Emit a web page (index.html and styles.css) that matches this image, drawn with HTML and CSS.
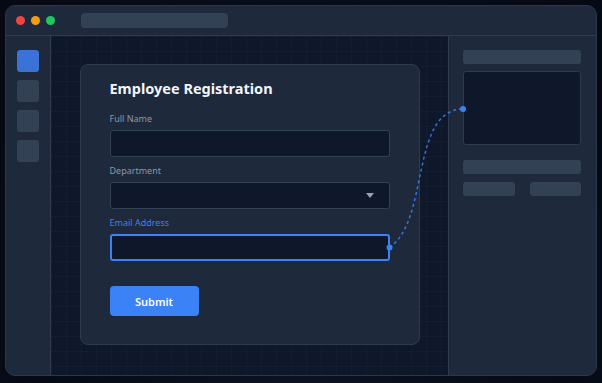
FILE: index.html
```html
<!DOCTYPE html>
<html lang="en">
  <head>
    <meta charset="UTF-8" />
    <meta name="viewport" content="width=device-width, initial-scale=1.0" />
    <title>Employee Registration</title>
    <link rel="stylesheet" href="styles.css">
  </head>
  <body>
    <div class="window">
      <!-- Title bar -->
      <div class="titlebar">
        <div class="dots">
          <span class="dot red"></span>
          <span class="dot amber"></span>
          <span class="dot green"></span>
        </div>
        <div class="address"></div>
      </div>
      <div class="workspace">
        <!-- Tool sidebar -->
        <div class="sidebar">
          <span class="tool active"></span>
          <span class="tool"></span>
          <span class="tool"></span>
          <span class="tool"></span>
        </div>
        <!-- Canvas with the form -->
        <div class="canvas">
          <form class="card" onsubmit="return false">
            <h1>Employee Registration</h1>
            <div class="field">
              <label>Full Name</label>
              <div class="input"></div>
            </div>
            <div class="field">
              <label>Department</label>
              <div class="input select"><span class="caret"></span></div>
            </div>
            <div class="field focused">
              <label>Email Address</label>
              <div class="input"></div>
            </div>
            <button class="submit">Submit</button>
          </form>
        </div>
        <!-- Properties panel -->
        <div class="panel">
          <div class="bar"></div>
          <div class="preview"></div>
          <div class="bar wide"></div>
          <div class="pair">
            <div class="bar"></div>
            <div class="bar"></div>
          </div>
        </div>
      </div>
    </div>
    <!-- Binding line from the email field to the preview box -->
    <svg class="link" width="602" height="383" viewBox="0 0 602 383">
      <path d="M389.5 247.5 C430 220, 410 110, 463 109" fill="none" stroke="#3b82f6" stroke-opacity="0.85" stroke-width="1.5" stroke-dasharray="3 3" />
      <circle cx="389.5" cy="247.5" r="3" fill="#3b82f6" />
      <circle cx="463" cy="109" r="3" fill="#3b82f6" />
    </svg>
  </body>
</html>
```

FILE: styles.css
```css
/* Reset */
* {
  box-sizing: border-box;
  margin: 0;
  padding: 0;
}
html,
body {
  height: 100%;
}
body {
  position: relative;
  padding: 5px;
  font-family: "Noto Sans", "DejaVu Sans", sans-serif;
  background: radial-gradient(ellipse at 50% 100%, #121b30 0%, #0a1020 55%, #060a16 100%);
  overflow: hidden;
}
/* App window */
.window {
  display: flex;
  flex-direction: column;
  width: 592px;
  height: 371px;
  background: #1e293b;
  border: 1px solid #2b374a;
  border-radius: 10px;
  overflow: hidden;
  box-shadow: 0 10px 30px rgba(0, 0, 0, 0.45);
}
.titlebar {
  display: flex;
  align-items: center;
  gap: 26px;
  height: 30px;
  padding-left: 10px;
  border-bottom: 1px solid #2e3b50;
  flex-shrink: 0;
}
.dots {
  display: flex;
  gap: 6px;
}
.dot {
  width: 9px;
  height: 9px;
  border-radius: 50%;
}
.red {
  background: #ef4444;
}
.amber {
  background: #f59e0b;
}
.green {
  background: #22c55e;
}
.address {
  width: 147px;
  height: 15px;
  background: #334155;
  border-radius: 4px;
}
.workspace {
  display: flex;
  flex: 1;
  min-height: 0;
}
/* Sidebar */
.sidebar {
  display: flex;
  flex-direction: column;
  gap: 8px;
  width: 45px;
  padding: 14px 0 0 11px;
  border-right: 1px solid #2e3b50;
  flex-shrink: 0;
}
.tool {
  width: 22px;
  height: 22px;
  background: #334155;
  border-radius: 3px;
}
.tool.active {
  background: #3a72d8;
}
/* Canvas */
.canvas {
  display: flex;
  align-items: center;
  justify-content: center;
  flex: 1;
  padding-bottom: 2px;
  background-color: #0f172a;
  background-image:
    linear-gradient(rgba(51, 65, 85, 0.13) 1px, transparent 1px),
    linear-gradient(90deg, rgba(51, 65, 85, 0.13) 1px, transparent 1px);
  background-size: 15px 15px;
  background-position: 0 0;
}
.card {
  display: flex;
  flex-direction: column;
  width: 340px;
  padding: 14px 29px 28px;
  background: #1e293b;
  border: 1px solid #2e3a4f;
  border-radius: 8px;
}
.card h1 {
  font-size: 14.5px;
  line-height: 18px;
  font-weight: 700;
  color: #f1f5f9;
  margin-bottom: 15px;
}
.field {
  display: flex;
  flex-direction: column;
  margin-bottom: 7px;
}
.field label {
  font-size: 9px;
  line-height: 13px;
  color: #8b98ac;
  margin-bottom: 5px;
}
.input {
  height: 27px;
  background: #0f172a;
  border: 1px solid #334155;
  border-radius: 3px;
}
.select {
  display: flex;
  align-items: center;
  justify-content: flex-end;
  padding-right: 15px;
}
.caret {
  width: 0;
  height: 0;
  border-left: 4px solid transparent;
  border-right: 4px solid transparent;
  border-top: 5px solid #94a3b8;
}
.focused {
  margin-bottom: 25px;
}
.focused label {
  color: #3b82f6;
}
.focused .input {
  border: 2px solid #3b82f6;
}
.submit {
  width: 89px;
  height: 30px;
  font-family: inherit;
  font-size: 11px;
  font-weight: 600;
  color: #fff;
  background: #3b82f6;
  border: none;
  border-radius: 4px;
}
/* Right panel */
.panel {
  display: flex;
  flex-direction: column;
  width: 148px;
  padding: 14px 15px 0 14px;
  border-left: 1px solid #2e3b50;
  flex-shrink: 0;
}
.bar {
  height: 14px;
  background: #334155;
  border-radius: 3px;
}
.preview {
  height: 74px;
  margin: 7px 0 15px;
  background: #0f172a;
  border: 1px solid #2e3a4f;
  border-radius: 3px;
}
.pair {
  display: flex;
  gap: 15px;
  margin-top: 8px;
}
.pair .bar {
  flex: 1;
}
/* Connector overlay */
.link {
  position: absolute;
  top: 0;
  left: 0;
  pointer-events: none;
}
```
